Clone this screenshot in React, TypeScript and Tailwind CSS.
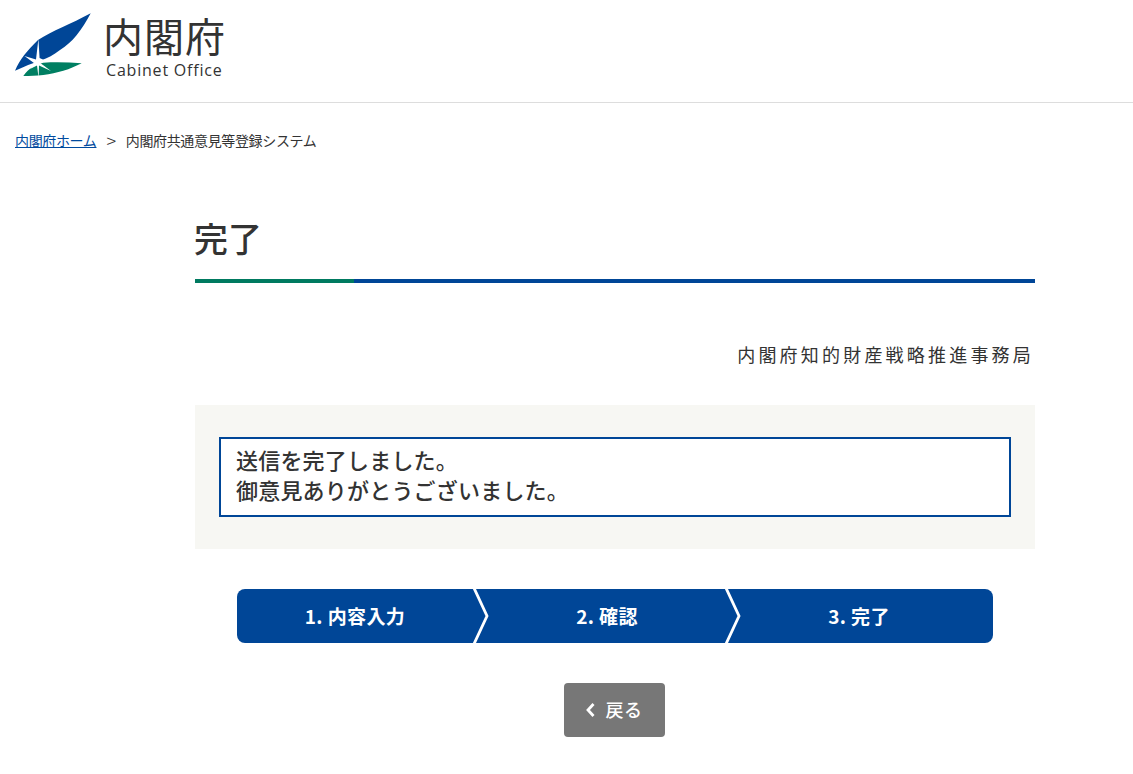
const font = "font-['Noto_Sans_CJK_JP','Noto_Sans',sans-serif]";

function Logo() {
  return (
    <svg width="80" height="66" viewBox="0 0 80 66" className="shrink-0">
      {/* leaf */}
      <path d="M0 57.7 C5 46 12 38 23 27 C37 18 56 11 75.7 0.3 C67 17 57 30 45 37 C38 42 33 45 27 47 C18 50 8 54 0 57.7 Z" fill="#004697" />
      {/* lower leaf */}
      <path d="M8.3 63 C11 59 14 56 18.3 53.7 C21 52 25 50.5 28.3 49.7 C41 49 54 49.3 66.7 50.3 C61 53 55 56 48.3 57.7 C42 59.5 35 61 28.3 62 C21 62.8 15 63 8.3 63 Z" fill="#007f62" />
      {/* star */}
      <path d="M23.4 26 L24.6 45 L30 47.6 L25 49.8 L36 58 L24 52.4 L23.6 65 L22 52.6 L15 56 L19.6 50.4 L9.5 43 L21 46.6 Z" fill="#fff" />
    </svg>
  );
}

function Chevron() {
  return (
    <svg width="16" height="54" viewBox="0 0 16 54" className="absolute top-0 right-0 z-10">
      <path d="M1 -1 L14 27 L1 55" fill="none" stroke="#fff" strokeWidth="2.8" />
    </svg>
  );
}

export default function App() {
  return (
    <div className={`min-h-[774px] bg-white text-[#333] ${font}`}>
      <header className="h-[103px] border-b border-[#ddd] flex items-start pl-[15px] pt-[13px] gap-[8px]">
        <Logo />
        <div className="flex flex-col items-start">
          <div className="text-[40px] leading-[44px] tracking-[1px]">内閣府</div>
          <div className="text-[16px] leading-[18px] ml-[3px] mt-[4px] tracking-[0.8px] font-['Open_Sans',sans-serif] font-medium">Cabinet Office</div>
        </div>
      </header>

      <nav className="pl-[15px] pt-[26px] flex items-center text-[14px] leading-[22px] tracking-[-0.35px]">
        <a className="text-[#004a9e] underline">内閣府ホーム</a>
        <span className="ml-[10px] mr-[10px] text-[18px] leading-[22px] font-light">&gt;</span>
        <span>内閣府共通意見等登録システム</span>
      </nav>

      <main className="ml-[195px] w-[840px] pt-[61px]">
        <h1 className="-ml-px text-[34px] leading-[52px] font-medium">完了</h1>
        <div className="flex h-1 mt-[15px]">
          <div className="w-[159px] bg-[#007a60]" />
          <div className="flex-1 bg-[#004697]" />
        </div>

        <p className="mt-[58px] pr-[1px] text-right text-[18px] leading-[26px] tracking-[3.2px]">内閣府知的財産戦略推進事務局</p>

        <div className="mt-[38px] bg-[#f7f7f3] px-6 py-8">
          <div className="h-[80px] border-2 border-[#004697] bg-white px-[15px] py-[5px] text-[22px] leading-[30px] tracking-[0.2px] font-medium">
            <p>送信を完了しました。</p>
            <p>御意見ありがとうございました。</p>
          </div>
        </div>

        <ol className="mt-10 ml-[42px] w-[756px] h-[54px] flex bg-[#004697] rounded-lg text-white text-[19px] font-bold tracking-[0.4px]">
          <li className="relative w-[252px] pr-4 flex items-center justify-center">
            1. 内容入力
            <Chevron />
          </li>
          <li className="relative w-[252px] pr-4 flex items-center justify-center">
            2. 確認
            <Chevron />
          </li>
          <li className="w-[252px] pr-4 flex items-center justify-center">3. 完了</li>
        </ol>

        <div className="mt-10 flex justify-center">
          <button className="ml-[-1px] w-[101px] h-[54px] pb-[2px] rounded bg-[#777] text-white text-[18px] tracking-[0.5px] font-medium flex items-center justify-center gap-[9px]">
            <svg width="12" height="16" viewBox="0 0 12 16" className="-ml-[2px] mt-[2px]">
              <path d="M8.5 2 L3 8 L8.5 14" fill="none" stroke="#fff" strokeWidth="2.8" />
            </svg>
            戻る
          </button>
        </div>
      </main>
    </div>
  );
}
